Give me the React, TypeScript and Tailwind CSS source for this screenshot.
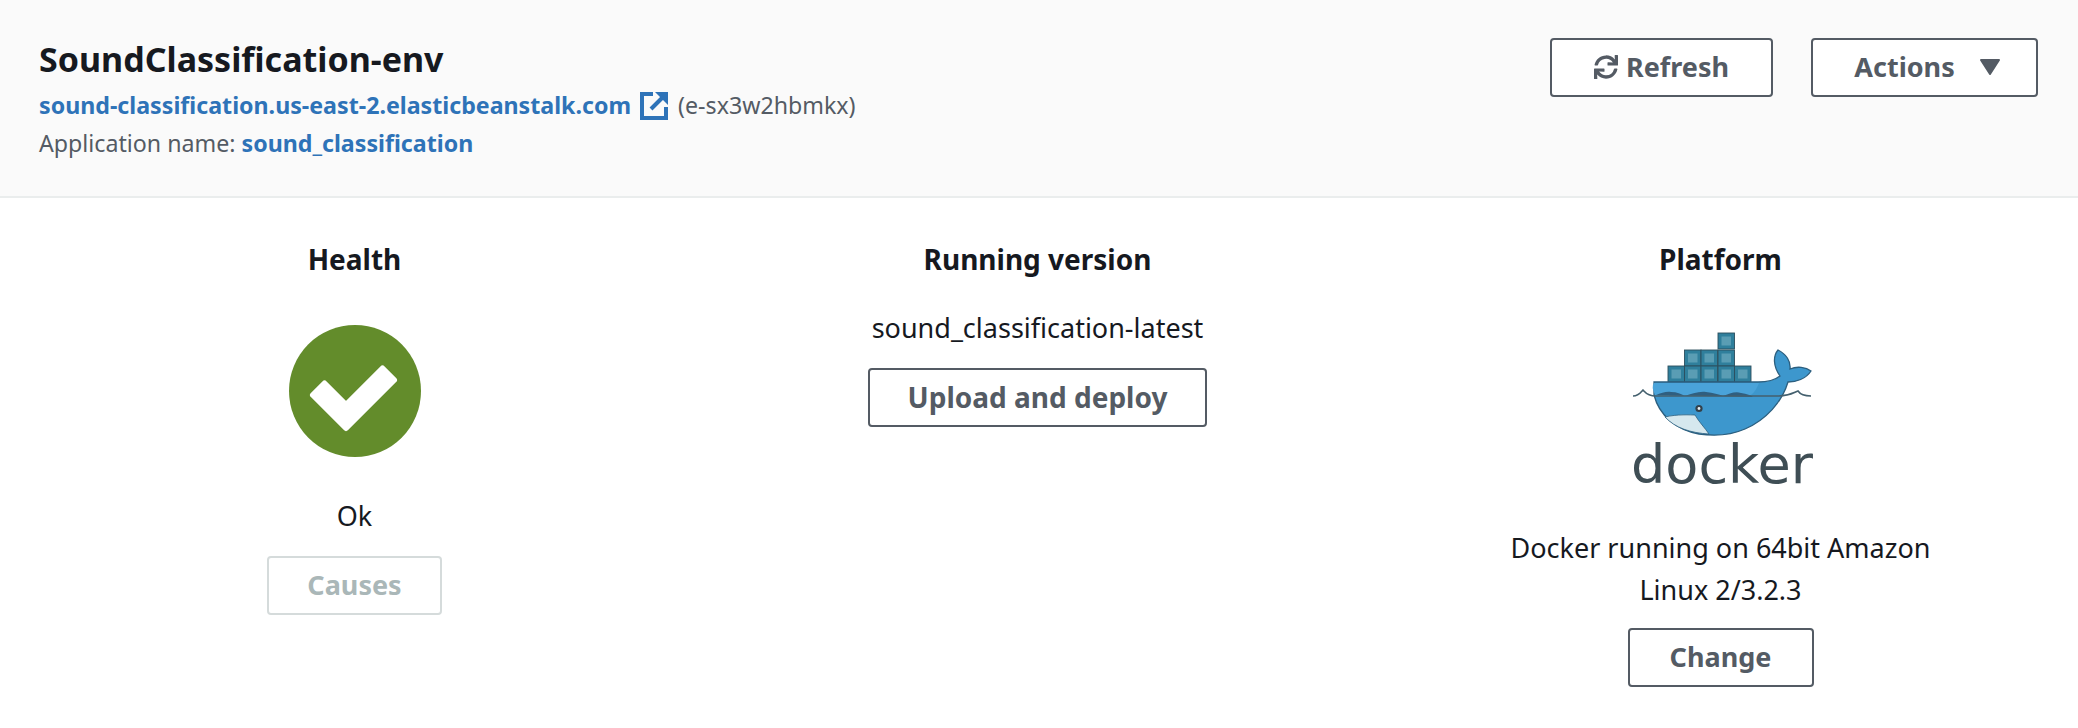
import React from 'react';
import { FaSync } from 'react-icons/fa';

const font = "font-['Noto_Sans',sans-serif]";
const btn = 'flex h-[59px] items-center justify-center rounded-[4px] border-2 border-[#545b64] bg-white pb-[2px] text-[27px] font-bold text-[#545b64]';

const ExternalIcon = () => (
  <svg width="29" height="29" viewBox="0 0 29 29" className="mx-[9px]">
    <path d="M13 3H2v24h24V16" fill="none" stroke="#2e73b8" strokeWidth="4" />
    <path d="M11 18 24 5" fill="none" stroke="#2e73b8" strokeWidth="4" />
    <path d="M15 1h13v13z" fill="#2e73b8" />
  </svg>
);

const HealthIcon = () => (
  <svg width="132" height="132" viewBox="0 0 132 132">
    <circle cx="66" cy="66" r="66" fill="#638c2b" />
    <path d="M35.5 58.5 57 80 93.5 43.5 105 55 57 103 24 70Z" fill="#fff" stroke="#fff" strokeWidth="6" strokeLinejoin="round" />
  </svg>
);

const Box = ({ x, y, w = 16.5, h = 16 }: { x: number; y: number; w?: number; h?: number }) => (
  <g>
    <rect x={x} y={y} width={w} height={h} fill="#2f7f9c" stroke="#2d4f5e" strokeWidth="0.9" />
    <rect x={x + 3.5} y={y + 3.5} width={w - 7} height={h - 7} fill="#5a9db4" />
  </g>
);

// traced off the 3x crop, viewBox is the crop at 1x
const DockerLogo = () => (
  <svg width="240" height="180" viewBox="0 0 240 180" className="blur-[0.5px]">
    <Box x={117} y={13} />
    <Box x={83.5} y={30} />
    <Box x={100} y={30} />
    <Box x={117} y={30} />
    <Box x={67} y={46} />
    <Box x={83.5} y={46} />
    <Box x={100} y={46} />
    <Box x={117} y={46} />
    <Box x={133.5} y={46} />
    <path
      d="M53 62H157C167 62 174 60 179 56C172 46 172 36 177 30C185 34 190 41 189 49C196 46 205 47 210 51C205 59 195 62 187 62C181 82 165 100 144 109C128 116 112 116 98 114C75 110 58 95 53 75Z"
      fill="#3d97cd"
      stroke="#2c5f7f"
      strokeWidth="1.3"
    />
    <path d="M54 75Q50 66 53 63H158C156 68 154 72 150 75Z" fill="#4aa3d9" />
    <path
      d="M55 75C60 73 66 71 70 72C76 72 80 74 84 76C90 74 98 71 105 72C112 73 118 74 122 76C128 74 134 71 140 73C146 74 150 75 152 77Z"
      fill="#2f5f80"
    />
    <path d="M32 76C38 76 40 72 42 70C44 72 46 76 55 76H178C188 76 192 73 197 71C199 74 204 76 210 76" fill="none" stroke="#44606e" strokeWidth="1.6" />
    <path d="M64 97C76 94 90 95 94 95C98 102 104 108 108 114C90 113 74 108 64 97Z" fill="#d6e8ee" stroke="#2c5f7f" strokeWidth="0.8" />
    <circle cx="98" cy="88.5" r="3.6" fill="#33404a" />
    <circle cx="98" cy="88.5" r="1.4" fill="#e8eef0" />
    <text x="30" y="163" fontFamily="'DejaVu Sans',sans-serif" fontSize="54" fill="#3f4e55" textLength="182" lengthAdjust="spacingAndGlyphs">
      docker
    </text>
  </svg>
);

export default function App() {
  return (
    <div className={`${font} min-h-[728px] w-full bg-white text-[27px] leading-[40px] text-[#16191f]`}>
      <header className="flex h-[198px] items-start justify-between border-b-2 border-[#eaeded] bg-[#fafafa] pl-[39px] pr-[40px]">
        <div className="pt-[37px]">
          <h1 className="text-[34px] font-bold leading-[44px]">SoundClassification-env</h1>
          <div className="mt-[4px] flex items-center">
            <a className="text-[23.2px] font-bold text-[#2e73b8]">sound-classification.us-east-2.elasticbeanstalk.com</a>
            <ExternalIcon />
            <span className="text-[23.2px] text-[#545b64]">(e-sx3w2hbmkx)</span>
          </div>
          <div className="-mt-[2px] text-[23.2px] text-[#545b64]">
            Application name: <a className="text-[23.2px] font-bold text-[#2e73b8]">sound_classification</a>
          </div>
        </div>
        <div className="flex gap-[38px] pt-[38px]">
          <button className={`${btn} w-[223px] gap-[8px]`}>
            <FaSync size={24} />
            Refresh
          </button>
          <button className={`${btn} w-[227px] gap-[24px] pl-[6px]`}>
            Actions
            <svg width="22" height="18" viewBox="0 0 22 18">
              <path d="M2 2h18l-9 14z" fill="#545b64" stroke="#545b64" strokeWidth="2" strokeLinejoin="round" />
            </svg>
          </button>
        </div>
      </header>

      <main className="grid grid-cols-3 pl-[13px] pr-[16px] pt-[41px]">
        <section className="flex flex-col items-center">
          <h2 className="text-[28px] font-bold">Health</h2>
          <div className="mt-[46px]">
            <HealthIcon />
          </div>
          <p className="mt-[39px]">Ok</p>
          <button className={`${btn} mt-[20px] w-[175px] border-[#d5dbdb] text-[#aab7b8]`}>Causes</button>
        </section>

        <section className="flex flex-col items-center">
          <h2 className="text-[28px] font-bold">Running version</h2>
          <p className="mt-[29px]">sound_classification-latest</p>
          <button className={`${btn} mt-[20px] w-[339px] text-[28px]`}>Upload and deploy</button>
        </section>

        <section className="flex flex-col items-center">
          <h2 className="text-[28px] font-bold">Platform</h2>
          <div className="mt-[41px] h-[180px]">
            <DockerLogo />
          </div>
          <p className="mt-[27px] w-[440px] text-center leading-[42px]">Docker running on 64bit Amazon Linux 2/3.2.3</p>
          <button className={`${btn} mt-[17px] w-[186px]`}>Change</button>
        </section>
      </main>
    </div>
  );
}
